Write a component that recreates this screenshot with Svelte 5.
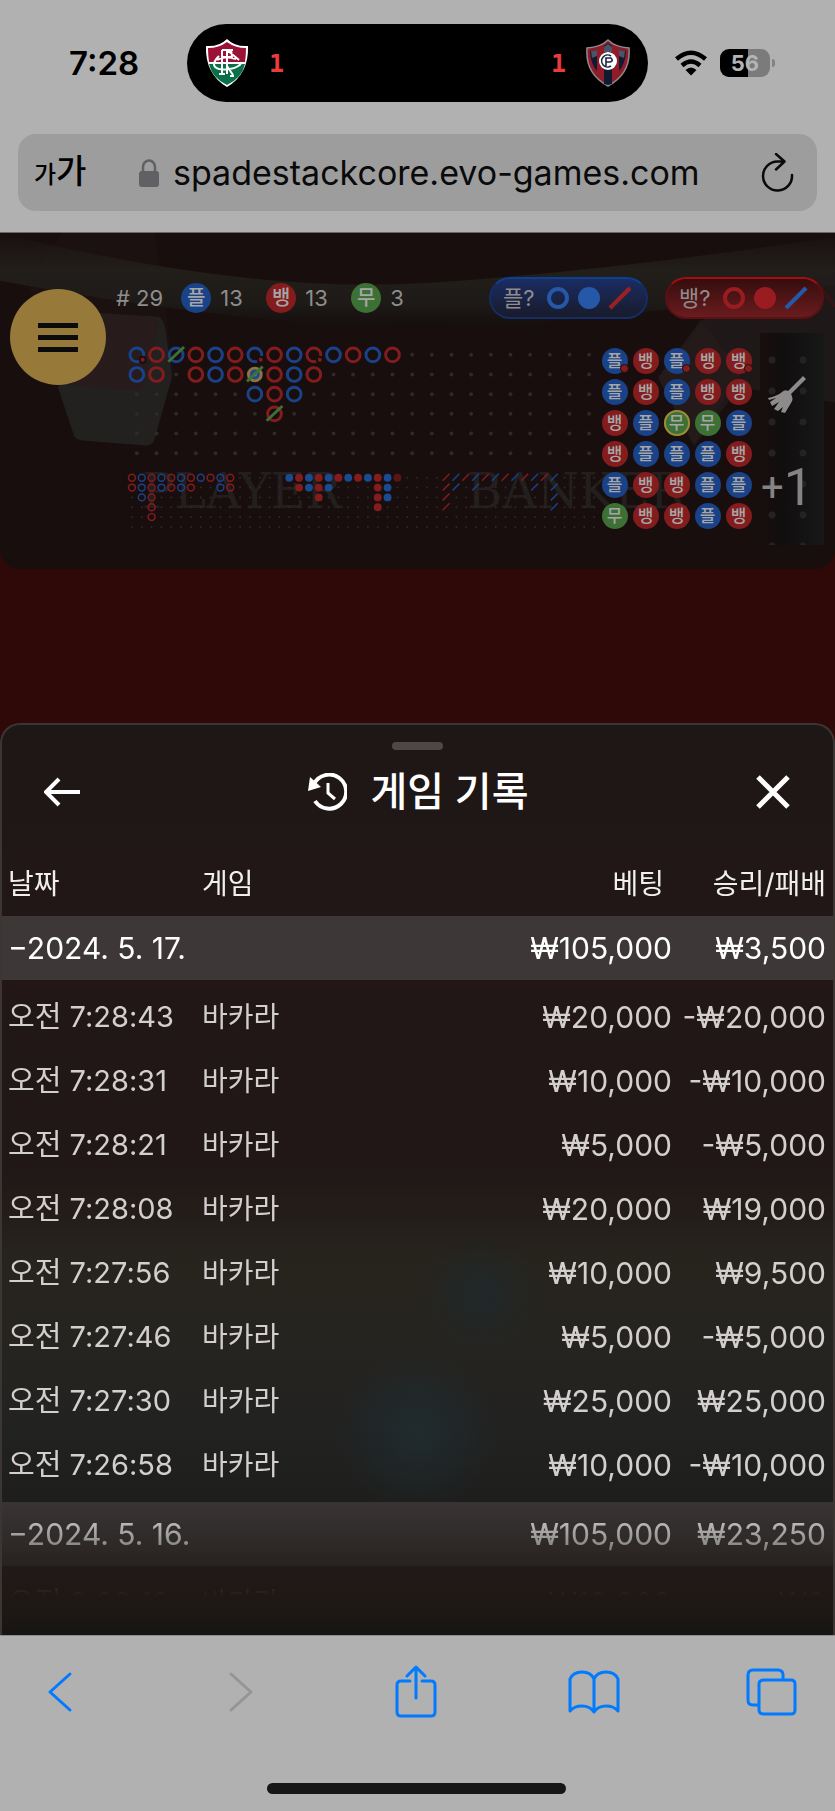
<script lang="ts">
    type Side = 'p' | 'b' | 't';

    interface Mark {
        side: string;
        col: number;
        row: number;
        tie?: boolean;
        pair?: boolean;
        last?: boolean;
        dim?: boolean;
    }

    const names: Record<Side, string> = { p: '플', b: '뱅', t: '무' };

    const totals: { side: Side; count: number }[] = [
        { side: 'p', count: 13 },
        { side: 'b', count: 13 },
        { side: 't', count: 3 }
    ];

    // upper case = pair dot, / = tie stroke, * = last result
    const bigRoad = ['Pp', 'bb', 'p/', 'bb', 'pp', 'bb', 'Pp/*p', 'bbbb/', 'ppp', 'Bb', 'p', 'b', 'p', 'b'];
    const bigEye = ['bb', 'ppp', 'bbbbb', 'pp', 'bb', 'pp', 'bb', 'p', 'b', 'pp', 'bb'];
    const smallRoad = ['p', 'bb', 'pp', 'bbb', 'pp', 'b', 'p', 'b', 'p', 'bbbb', 'ppp', 'b-'];
    const cockroach = ['bbbb', 'pp', 'b', 'pp', 'b', 'p', 'b', 'p', 'b', 'pp', 'b', 'pppp'];

    const beads = ['P', 'b', 'P', 'b', 'B', 'p', 'b', 'p', 'b', 'b', 'b', 'p', 't*', 't', 'p',
        'b', 'p', 'p', 'p', 'b', 'p', 'b', 'b', 'p', 'p', 't', 'b', 'b', 'p', 'b'];

    function parse(road: string[]): Mark[] {
        return road.flatMap((text, col) =>
            [...text.matchAll(/([pb])(\/?)(\*?)(-?)/gi)].map((m, row) => ({
                side: m[1].toLowerCase(),
                pair: m[1] !== m[1].toLowerCase(),
                tie: m[2] !== '',
                last: m[3] !== '',
                dim: m[4] !== '',
                col,
                row
            }))
        );
    }

    const big = parse(bigRoad);
    const eye = parse(bigEye);
    const small = parse(smallRoad);
    const roach = parse(cockroach);

    function emptyDots(cols: number, marks: { col: number; row: number }[]) {
        const used = new Set(marks.map((m) => `${m.col}:${m.row}`));
        const dots: { col: number; row: number }[] = [];
        for (let col = 0; col < cols; col++) {
            for (let row = 0; row < 6; row++) {
                if (!used.has(`${col}:${row}`)) dots.push({ col, row });
            }
        }
        return dots;
    }

    const bigDots = emptyDots(24, big);
    const smallDots = emptyDots(48, [
        ...eye,
        ...small.map((m) => ({ col: m.col + 16, row: m.row })),
        ...roach.map((m) => ({ col: m.col + 32, row: m.row }))
    ]);

    let days = $state([
        {
            date: '2024. 5. 17.', bet: '₩105,000', win: '₩3,500', open: true,
            rounds: [
                ['오전 7:28:43', '₩20,000', '-₩20,000'],
                ['오전 7:28:31', '₩10,000', '-₩10,000'],
                ['오전 7:28:21', '₩5,000', '-₩5,000'],
                ['오전 7:28:08', '₩20,000', '₩19,000'],
                ['오전 7:27:56', '₩10,000', '₩9,500'],
                ['오전 7:27:46', '₩5,000', '-₩5,000'],
                ['오전 7:27:30', '₩25,000', '₩25,000'],
                ['오전 7:26:58', '₩10,000', '-₩10,000']
            ]
        },
        {
            date: '2024. 5. 16.', bet: '₩105,000', win: '₩23,250', open: true,
            rounds: [['오전 9:29:12', '₩10,000', '₩0']]
        }
    ]);

    let url = $state('spadestackcore.evo-games.com');
</script>

<div class="phone">
    <header class="browser-top">
        <div class="status">
            <time class="clock">7:28</time>
            <div class="island">
                <svg class="crest" viewBox="0 0 44 50" aria-hidden="true">
                    <path d="M22 1Q14 9 1 8Q0 36 22 49Q44 36 43 8Q30 9 22 1Z" fill="#fff" />
                    <path d="M22 4Q14 10 3 10Q3 17 4 24H40Q41 17 41 10Q30 10 22 4Z" fill="#9b1236" />
                    <path d="M4 26Q7 40 22 47Q37 40 40 26Z" fill="#0a7048" />
                    <path d="M17 12V36M17 12H28M17 19H26M22 11V36M22 12L34 22M26 11L27 20M14 18Q4 28 14 31Q28 33 36 26M22 28L28 37M14 36H20M25 38H29M12 22Q20 17 31 21" fill="none" stroke="#fff" stroke-width="2" />
                </svg>
                <span class="score">1</span>
                <span class="score away">1</span>
                <svg class="crest" viewBox="0 0 44 50" aria-hidden="true">
                    <path d="M22 2Q15 9 1 10Q-1 36 22 48Q45 36 43 10Q29 9 22 2Z" fill="#8f1d28" stroke="#8b8b93" stroke-width="1.5" />
                    <path d="M18 8L22 5L26 8V46L22 47L18 46ZM4 13L11 12V33Q5 27 4 13ZM40 13L33 12V33Q39 27 40 13Z" fill="#121a33" />
                    <path d="M18 9L22 6L26 9V14H18ZM5 13L11 12V18L6 20ZM39 13L33 12V18L38 20Z" fill="#4b5269" />
                    <circle cx="22" cy="23" r="9" fill="#fff" />
                    <path d="M25 18A6 6 0 1 0 25 28M20 28V20H25Q28 23 24 24H20" fill="none" stroke="#1c2442" stroke-width="1.6" />
                </svg>
            </div>
            <div class="signals">
                <svg class="wifi" viewBox="0 0 34 26" aria-hidden="true">
                    <path d="M2.500 9Q17-3.500 31.500 9M8 15.500Q17 7.500 26 15.500" fill="none" stroke="#000" stroke-width="4.500" />
                    <path d="M11.500 20Q17 15 22.500 20L17 25.500Z" />
                </svg>
                <div class="battery"><span>56</span></div>
            </div>
        </div>
        <div class="address">
            <button class="text-size" aria-label="글자 크기"><small>가</small>가</button>
            <svg class="lock" viewBox="0 0 20 28" aria-hidden="true">
                <rect y="12" width="20" height="16" rx="3" fill="#616165" />
                <path d="M4 13V8A6 6.500 0 0 1 16 8V13" fill="none" stroke="#616165" stroke-width="2.500" />
            </svg>
            <input type="text" aria-label="주소" bind:value={url} />
            <button class="reload" aria-label="새로 고침">
                <svg viewBox="0 0 34 40" aria-hidden="true">
                    <path d="M22 8.500H16.500A14.500 14.500 0 1 0 31 22M15 1L23.500 8.500L15 16.500" fill="none" stroke="#0a0a0a" stroke-width="2.500" stroke-linecap="round" stroke-linejoin="round" />
                </svg>
            </button>
        </div>
    </header>

    <main>
        <section class="board">
            <svg class="scene" viewBox="0 0 835 337" preserveAspectRatio="none" aria-hidden="true">
                <defs>
                    <linearGradient id="beam" x1="0" y1="0" x2="0" y2="1">
                        <stop offset="0" stop-color="#24201b" stop-opacity="0" />
                        <stop offset=".4" stop-color="#221e1a" />
                        <stop offset=".75" stop-color="#1e1a17" />
                        <stop offset="1" stop-color="#140e0e" />
                    </linearGradient>
                </defs>
                <path d="M0 0Q250 62 430 50T835 4V52Q600 92 430 94T0 48Z" fill="url(#beam)" />
                <path d="M62 0L28 50L76 200L150 211L174 140L155 0Z" fill="#252020" opacity=".2" />
                <path d="M96 80L158 84Q164 86 166 100L172 145L154 208Q152 214 142 213L82 208Q74 207 73 200L58 155Z" fill="#232020" />
                <path d="M98 81L152 84Q164 86 155 110L142 155Q138 158 128 157L68 152Z" fill="#271b1b" />
                <path d="M658 145L700 88L835 40V170L740 155L694 214Z" fill="#221d1c" opacity=".7" />
                <path d="M658 145L702 90L742 140L694 212Z" fill="#261b1b" opacity=".8" />
                <path d="M818 50L835 74" stroke="#3b1212" stroke-width="3" />
                <text x="142" y="276">PLAYER</text>
                <text x="467" y="276">BANKER</text>
            </svg>

            <div class="stats">
                <span class="round"># 29</span>
                {#each totals as total}
                    <span class="disc {total.side}">{names[total.side]}</span>
                    <span class="count">{total.count}</span>
                {/each}
                <div class="asks">
                    <button class="ask player">
                        플?
                        <svg viewBox="0 0 86 24" aria-hidden="true">
                            <circle cx="12" cy="12" r="9" fill="none" stroke="#2558a8" stroke-width="4" />
                            <circle cx="43" cy="12" r="11" fill="#2558a8" />
                            <path d="M64 22L84 2" stroke="#9a2024" stroke-width="4" />
                        </svg>
                    </button>
                    <button class="ask banker">
                        뱅?
                        <svg viewBox="0 0 86 24" aria-hidden="true">
                            <circle cx="12" cy="12" r="9" fill="none" stroke="#9a1c20" stroke-width="4" />
                            <circle cx="43" cy="12" r="11" fill="#9a1c20" />
                            <path d="M64 22L84 2" stroke="#2558a8" stroke-width="4" />
                        </svg>
                    </button>
                </div>
            </div>

            <div class="roads">
                <svg class="road" viewBox="0 0 480 190" aria-label="로드맵">
                    {#each bigDots as dot}
                        <circle class="empty" cx={dot.col * 20 + 10} cy={dot.row * 20 + 10} r="2" />
                    {/each}
                    {#each big as mark}
                        <g class={mark.side} transform="translate({mark.col * 20 + 10} {mark.row * 20 + 10})">
                            {#if mark.last}
                                <circle class="gold" r="8" />
                                <circle class="solid" r="5" />
                                <circle class="hole" r="2" />
                            {:else}
                                <circle class="ring" r="7" />
                            {/if}
                            {#if mark.pair}
                                <circle class="cutout" cx="6" cy="5" r="4" />
                                <circle class="pair" cx="6" cy="5" r="2" />
                            {/if}
                            {#if mark.tie}
                                <path class="tie" d="M-8 7L8-8" />
                            {/if}
                        </g>
                    {/each}
                    <g transform="translate(0 130)">
                        {#each smallDots as dot}
                            <circle class="empty" cx={dot.col * 10 + 5} cy={dot.row * 10 + 5} r="1" />
                        {/each}
                        {#each eye as mark}
                            <circle class="ring thin {mark.side}" cx={mark.col * 10 + 5} cy={mark.row * 10 + 5} r="3.500" />
                        {/each}
                        {#each small as mark}
                            <circle class="solid {mark.side}" class:dim={mark.dim} cx={mark.col * 10 + 165} cy={mark.row * 10 + 5} r="4" />
                        {/each}
                        {#each roach as mark}
                            <path class="ring slash {mark.side}" d="M{mark.col * 10 + 321} {mark.row * 10 + 8}l7-7" />
                        {/each}
                    </g>
                </svg>
                <div class="plate">
                    <div class="beads">
                        {#each beads as bead}
                            {@const side = bead[0].toLowerCase() as Side}
                            <span class="bead {side}" class:pair={bead[0] !== side} class:last={bead[1] === '*'}>{names[side]}</span>
                        {/each}
                    </div>
                    <div class="tools">
                        <button aria-label="지우기">
                            <svg class="broom" viewBox="0 0 40 40" aria-hidden="true">
                                <path d="M36 1L39 4L24 19Q27 24 24 28L18 38L14 37L16 32L11 36L7 34L12 27L5 31L3 27L9 23L2 25L1 23Q10 21 15 17Q18 14 21 16Z" fill="#8d8b8b" />
                            </svg>
                        </button>
                        <button class="plus"><span>+</span>1</button>
                    </div>
                </div>
            </div>

            <button class="menu" aria-label="메뉴"><i></i><i></i><i></i></button>
        </section>

        <section class="sheet">
            <div class="handle"></div>
            <div class="sheet-head">
                <button aria-label="뒤로">
                    <svg viewBox="0 0 36 36" aria-hidden="true">
                        <path d="M36 18H3M15 5L2 18L15 31" fill="none" stroke="#fff" stroke-width="4" />
                    </svg>
                </button>
                <h1>
                    <svg viewBox="0 0 40 38" aria-hidden="true">
                        <path d="M7 11A17 17 0 1 1 8 28" fill="none" stroke="#fff" stroke-width="4" />
                        <path d="M3 4L1 18L14 14Z" fill="#fff" />
                        <path d="M21 10V20L28 26" fill="none" stroke="#fff" stroke-width="3" />
                    </svg>
                    게임 기록
                </h1>
                <button aria-label="닫기">
                    <svg viewBox="0 0 36 36" aria-hidden="true">
                        <path d="M3 3L33 33M33 3L3 33" fill="none" stroke="#fff" stroke-width="5" />
                    </svg>
                </button>
            </div>

            <div class="scroll">
                <table>
                    <thead>
                        <tr>
                            <th>날짜</th>
                            <th>게임</th>
                            <th class="bet">베팅</th>
                            <th class="win">승리/패배</th>
                        </tr>
                    </thead>
                    {#each days as day}
                        <tbody>
                            <tr class="day">
                                <th colspan="2" scope="rowgroup">
                                    <button onclick={() => (day.open = !day.open)}>{day.open ? '−' : '+'}{day.date}</button>
                                </th>
                                <td class="bet">{day.bet}</td>
                                <td class="win">{day.win}</td>
                            </tr>
                        </tbody>
                        {#if day.open}
                            <tbody class="rounds">
                                {#each day.rounds as [time, bet, win]}
                                    <tr>
                                        <td>{time}</td>
                                        <td class="game">바카라</td>
                                        <td class="bet">{bet}</td>
                                        <td class="win">{win}</td>
                                    </tr>
                                {/each}
                            </tbody>
                        {/if}
                    {/each}
                </table>
            </div>
        </section>
    </main>

    <footer>
        <nav>
            <button aria-label="이전">
                <svg viewBox="0 0 52 56"><path d="M36 10L16 28L36 46" /></svg>
            </button>
            <button class="off" aria-label="다음">
                <svg viewBox="0 0 52 56"><path d="M19 10L39 28L19 46" /></svg>
            </button>
            <button aria-label="공유">
                <svg viewBox="0 0 52 56"><path d="M20 17H11Q7 17 7 21V48Q7 52 11 52H41Q45 52 45 48V21Q45 17 41 17H32M26 34V3M17 12L26 3L35 12" /></svg>
            </button>
            <button aria-label="책갈피">
                <svg viewBox="0 0 52 56"><path d="M26 15Q23 8 14 8Q5 8 2 15V47Q6 42 14 42Q22 42 26 48Q30 42 38 42Q46 42 50 47V15Q47 8 38 8Q29 8 26 15ZM26 15V48" /></svg>
            </button>
            <button aria-label="탭">
                <svg viewBox="0 0 52 56"><path d="M13 41H7Q2 41 2 36V11Q2 6 7 6H32Q37 6 37 11V16M18 16H45Q49 16 49 20V46Q49 50 45 50H18Q13 50 13 46V20Q13 16 18 16Z" /></svg>
            </button>
        </nav>
        <div class="home"></div>
    </footer>
</div>

<style>
    :global(body) {
        margin: 0;
        background: #b1b1b1;
    }

    .phone {
        font-family: Inter, 'Noto Sans CJK KR', sans-serif;
        color: #000;
        background: #b1b1b1;
        overflow: hidden;
    }

    button {
        padding: 0;
        border: 0;
        background: none;
        font: inherit;
        color: inherit;
        cursor: pointer;
    }

    svg {
        display: block;
    }

    .browser-top {
        padding: 24px 18px 21px;
        border-bottom: 1px solid #6a6868;
    }

    .status {
        display: grid;
        grid-template-columns: 169px 1fr 169px;
        align-items: center;
        height: 78px;
    }

    .clock {
        padding-left: 51px;
        font-size: 33px;
        font-weight: 600;
        line-height: 38px;
    }

    .island {
        display: flex;
        align-items: center;
        gap: 20px;
        height: 78px;
        padding: 0 18px;
        box-sizing: border-box;
        border-radius: 39px;
        background: #000;
    }

    .crest {
        width: 44px;
        height: 50px;
    }

    .score {
        font-family: 'DejaVu Sans Mono', monospace;
        font-size: 25px;
        font-weight: 700;
        color: #e93c3c;
    }

    .away {
        margin-left: auto;
    }

    .signals {
        display: flex;
        align-items: center;
        gap: 12px;
        padding-left: 26px;
    }

    .wifi {
        width: 34px;
        height: 26px;
    }

    .battery {
        position: relative;
        width: 50px;
        height: 28px;
        border-radius: 9px;
        background: linear-gradient(90deg, #000 56%, #7b7b7b 56%);
        font-size: 22px;
        font-weight: 700;
        line-height: 28px;
        text-align: center;
        color: #b4b4b4;
    }

    .battery::after {
        content: '';
        position: absolute;
        left: 52px;
        top: 10px;
        width: 3px;
        height: 8px;
        border-radius: 0 4px 4px 0;
        background: #838383;
    }

    .address {
        display: flex;
        align-items: center;
        height: 77px;
        margin-top: 32px;
        padding: 0 22px 0 16px;
        border-radius: 18px;
        background: #9d9d9d;
    }

    .text-size {
        width: 105px;
        text-align: left;
        font-size: 33px;
        font-weight: 500;
        line-height: 40px;
    }

    .text-size small {
        font-size: 24px;
    }

    .lock {
        width: 20px;
        height: 28px;
    }

    .address input {
        flex: 1;
        min-width: 0;
        height: 50px;
        padding: 0;
        margin: 0 16px 0 14px;
        border: 0;
        outline: 0;
        background: none;
        font-family: inherit;
        font-size: 34px;
        color: #0a0a0a;
    }

    .reload svg {
        width: 34px;
        height: 40px;
    }

    main {
        background: #2f0808;
    }

    .board {
        position: relative;
        padding: 44px 11px 24px 116px;
        border-radius: 0 0 20px 20px;
        background: #190e0e;
        color: #8f8d8d;
    }

    .scene {
        position: absolute;
        inset: 0;
        width: 100%;
        height: 100%;
    }

    .scene text {
        font-family: 'DejaVu Serif', serif;
        font-size: 48px;
        fill: #231f1f;
    }

    .stats {
        position: relative;
        display: flex;
        align-items: center;
        height: 42px;
        font-size: 22px;
        line-height: 28px;
    }

    .disc,
    .bead {
        display: grid;
        place-items: center;
        border-radius: 50%;
        font-weight: 500;
        color: #a6a6a6;
    }

    .disc {
        width: 30px;
        height: 30px;
        margin-left: 18px;
        font-size: 20px;
    }

    .count {
        min-width: 28px;
        margin-left: 9px;
    }

    .disc.p,
    .bead.p {
        background: #1a4288;
    }

    .disc.b,
    .bead.b {
        background: #841c1e;
    }

    .disc.t,
    .bead.t {
        background: #3c7035;
    }

    .asks {
        display: flex;
        gap: 17px;
        margin-left: auto;
    }

    .ask {
        display: flex;
        align-items: center;
        justify-content: space-between;
        width: 159px;
        height: 42px;
        padding: 0 14px 0 12px;
        box-sizing: border-box;
        border: 2px solid #142d68;
        border-top-color: #0a4191;
        border-radius: 21px;
        background: linear-gradient(#1a2c62, #191b2b);
    }

    .ask.banker {
        border-color: #5c1014;
        border-top-color: #a60d10;
        background: linear-gradient(#350d0e, #6a1c1e);
    }

    .ask svg {
        width: 86px;
        height: 24px;
    }

    .roads {
        position: relative;
        display: grid;
        grid-template-columns: 472fr 225fr;
        align-items: start;
        margin: 14px 0 0 11px;
    }

    .road {
        width: 100%;
        margin-top: 12px;
    }

    .empty {
        fill: #2f2929;
    }

    .ring {
        fill: none;
        stroke-width: 3;
    }

    .thin,
    .slash {
        stroke-width: 1.5;
    }

    .p .ring,
    .ring.p {
        stroke: #1a4288;
    }

    .b .ring,
    .ring.b {
        stroke: #841c1e;
    }

    .p .solid,
    .solid.p {
        fill: #1a4a90;
    }

    .b .solid,
    .solid.b {
        fill: #841c1e;
    }

    .solid.dim {
        fill: #581516;
    }

    .gold {
        fill: #8d7440;
    }

    .hole {
        fill: #9b8546;
    }

    .cutout {
        fill: #190e0e;
    }

    .road .pair {
        fill: #841c1e;
    }

    .tie {
        stroke: #3c7035;
        stroke-width: 3;
    }

    .plate {
        display: grid;
        grid-template-columns: 161fr 64fr;
    }

    .beads {
        display: grid;
        grid-template-columns: repeat(5, 31px);
        grid-auto-rows: 31px;
        place-items: center;
        padding-top: 12px;
        justify-content: start;
    }

    .bead {
        position: relative;
        width: 26px;
        height: 26px;
        font-size: 17px;
        line-height: 26px;
    }

    .bead.pair::after {
        content: '';
        position: absolute;
        right: -1px;
        bottom: 1px;
        width: 7px;
        height: 7px;
        border: 1px solid #190e0e;
        border-radius: 50%;
        background: #841c1e;
    }

    .bead.last {
        box-shadow: inset 0 0 0 2px #a08a35;
    }

    .tools {
        display: grid;
        grid-template-columns: 54px;
        grid-template-rows: 124px 62px 26px;
        place-items: center;
        background:
            radial-gradient(circle at 12px 15px, #242222 3px, transparent 4px) 0 12px / 31px 31px,
            linear-gradient(90deg, #190e0e, #110e0e 35%, #171818);
    }

    .broom {
        width: 40px;
        height: 40px;
    }

    .plus {
        display: flex;
        align-items: center;
        font-family: Roboto, sans-serif;
        font-size: 52px;
        line-height: 60px;
        color: #858383;
    }

    .plus span {
        font-size: 40px;
        line-height: 52px;
    }

    .menu {
        position: absolute;
        left: 10px;
        top: 56px;
        display: grid;
        place-content: center;
        gap: 7px;
        width: 96px;
        height: 96px;
        border-radius: 50%;
        background: #97793a;
    }

    .menu i {
        width: 40px;
        height: 5px;
        background: #0b0b0b;
    }

    .sheet {
        margin-top: 154px;
        border: 2px solid #3b3534;
        border-bottom: 0;
        border-radius: 20px 20px 0 0;
        color: #fff;
        background:
            radial-gradient(circle at 415px 706px, #1f2b2e, transparent 80px),
            radial-gradient(circle at 480px 570px, #20282a, transparent 60px),
            linear-gradient(#1d1716, #221716 220px, #201716 440px, #27241d 540px, #262420 620px, #222221 700px, #1e1e1d 770px, #201917 850px, #1e1815 885px, #161414);
    }

    .handle {
        width: 51px;
        height: 8px;
        margin: 17px auto 0;
        border-radius: 4px;
        background: #4d4746;
    }

    .sheet-head {
        display: flex;
        align-items: center;
        justify-content: space-between;
        height: 84px;
        margin-bottom: 18px;
        padding: 0 42px;
    }

    .sheet-head button svg {
        width: 36px;
        height: 36px;
    }

    h1 {
        display: flex;
        align-items: center;
        gap: 24px;
        margin: 0;
        font-size: 40px;
        font-weight: 500;
        line-height: 60px;
    }

    h1 svg {
        width: 40px;
        height: 38px;
    }

    .scroll {
        -webkit-mask-image: linear-gradient(to top, transparent 38px, #000 145px);
        mask-image: linear-gradient(to top, transparent 38px, #000 145px);
    }

    table {
        width: 100%;
        table-layout: fixed;
        border-collapse: collapse;
        font-size: 29px;
        line-height: 40px;
    }

    th,
    td {
        height: 64px;
        padding: 0 7px 0 6px;
        font-weight: 400;
        text-align: left;
        white-space: nowrap;
    }

    th:first-child {
        width: 181px;
    }

    .bet,
    .win {
        padding-left: 0;
        text-align: right;
    }

    td.bet,
    td.win,
    .day th {
        font-size: 30px;
    }

    th.bet {
        width: 186px;
        padding-right: 15px;
    }

    th.win {
        width: 147px;
    }

    thead th,
    .game {
        font-size: 28px;
    }

    thead th {
        color: #f0eeee;
    }

    .day {
        background: #3d3837;
    }

    .rounds {
        color: #d2cfce;
    }

    .rounds::before,
    .rounds:not(:last-child)::after {
        content: '';
        display: table-row;
        height: 5px;
    }

    footer {
        border-top: 1px solid #8c8c8c;
        padding: 28px 37px 17px 34px;
    }

    nav {
        display: flex;
        justify-content: space-between;
    }

    nav button {
        color: #007aff;
    }

    nav .off {
        color: #959595;
    }

    nav svg {
        width: 52px;
        height: 56px;
        fill: none;
        stroke: currentColor;
        stroke-width: 3;
        stroke-linecap: round;
        stroke-linejoin: round;
    }

    .home {
        width: 299px;
        height: 11px;
        margin: 63px auto 0;
        border-radius: 6px;
        background: #161616;
    }
</style>
